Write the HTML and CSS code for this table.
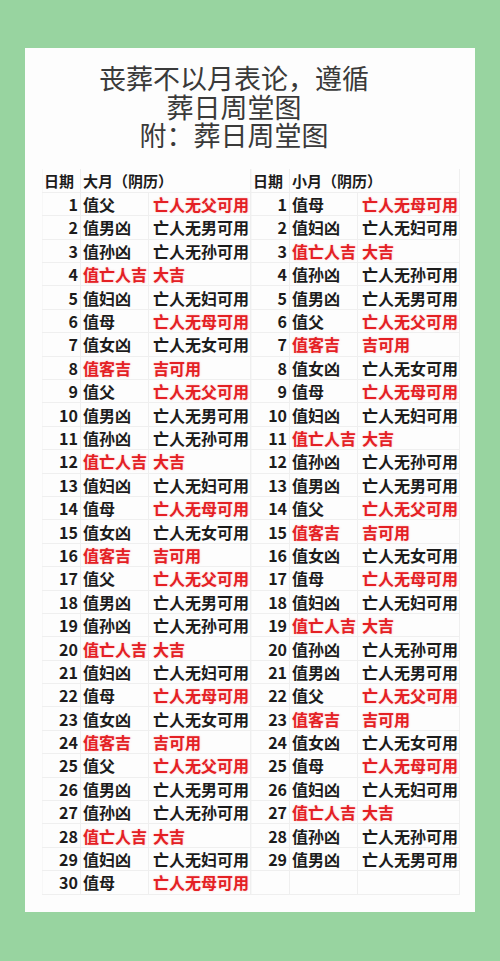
FILE: index.html
```html
<!DOCTYPE html>
<html lang="zh">
<head>
<meta charset="utf-8">
<title>葬日周堂图</title>
<link rel="stylesheet" href="styles.css">
</head>
<body>
<div class="card">
  <div class="title">
    <div>丧葬不以月表论，遵循</div>
    <div>葬日周堂图</div>
    <div>附：葬日周堂图</div>
  </div>
  <div class="tables">
    <table class="tbl">
      <colgroup><col class="c-num"><col class="c-val"><col class="c-res"></colgroup>
      <tr class="head"><td class="h-date">日期</td><td colspan="2" class="h-month">大月（阴历）</td></tr>
      <tr><td class="num">1</td><td>值父</td><td class="red">亡人无父可用</td></tr>
      <tr><td class="num">2</td><td>值男凶</td><td>亡人无男可用</td></tr>
      <tr><td class="num">3</td><td>值孙凶</td><td>亡人无孙可用</td></tr>
      <tr><td class="num">4</td><td class="red">值亡人吉</td><td class="red">大吉</td></tr>
      <tr><td class="num">5</td><td>值妇凶</td><td>亡人无妇可用</td></tr>
      <tr><td class="num">6</td><td>值母</td><td class="red">亡人无母可用</td></tr>
      <tr><td class="num">7</td><td>值女凶</td><td>亡人无女可用</td></tr>
      <tr><td class="num">8</td><td class="red">值客吉</td><td class="red">吉可用</td></tr>
      <tr><td class="num">9</td><td>值父</td><td class="red">亡人无父可用</td></tr>
      <tr><td class="num">10</td><td>值男凶</td><td>亡人无男可用</td></tr>
      <tr><td class="num">11</td><td>值孙凶</td><td>亡人无孙可用</td></tr>
      <tr><td class="num">12</td><td class="red">值亡人吉</td><td class="red">大吉</td></tr>
      <tr><td class="num">13</td><td>值妇凶</td><td>亡人无妇可用</td></tr>
      <tr><td class="num">14</td><td>值母</td><td class="red">亡人无母可用</td></tr>
      <tr><td class="num">15</td><td>值女凶</td><td>亡人无女可用</td></tr>
      <tr><td class="num">16</td><td class="red">值客吉</td><td class="red">吉可用</td></tr>
      <tr><td class="num">17</td><td>值父</td><td class="red">亡人无父可用</td></tr>
      <tr><td class="num">18</td><td>值男凶</td><td>亡人无男可用</td></tr>
      <tr><td class="num">19</td><td>值孙凶</td><td>亡人无孙可用</td></tr>
      <tr><td class="num">20</td><td class="red">值亡人吉</td><td class="red">大吉</td></tr>
      <tr><td class="num">21</td><td>值妇凶</td><td>亡人无妇可用</td></tr>
      <tr><td class="num">22</td><td>值母</td><td class="red">亡人无母可用</td></tr>
      <tr><td class="num">23</td><td>值女凶</td><td>亡人无女可用</td></tr>
      <tr><td class="num">24</td><td class="red">值客吉</td><td class="red">吉可用</td></tr>
      <tr><td class="num">25</td><td>值父</td><td class="red">亡人无父可用</td></tr>
      <tr><td class="num">26</td><td>值男凶</td><td>亡人无男可用</td></tr>
      <tr><td class="num">27</td><td>值孙凶</td><td>亡人无孙可用</td></tr>
      <tr><td class="num">28</td><td class="red">值亡人吉</td><td class="red">大吉</td></tr>
      <tr><td class="num">29</td><td>值妇凶</td><td>亡人无妇可用</td></tr>
      <tr><td class="num">30</td><td>值母</td><td class="red">亡人无母可用</td></tr>
    </table>
    <table class="tbl">
      <colgroup><col class="c-num"><col class="c-val"><col class="c-res"></colgroup>
      <tr class="head"><td class="h-date">日期</td><td colspan="2" class="h-month">小月（阴历）</td></tr>
      <tr><td class="num">1</td><td>值母</td><td class="red">亡人无母可用</td></tr>
      <tr><td class="num">2</td><td>值妇凶</td><td>亡人无妇可用</td></tr>
      <tr><td class="num">3</td><td class="red">值亡人吉</td><td class="red">大吉</td></tr>
      <tr><td class="num">4</td><td>值孙凶</td><td>亡人无孙可用</td></tr>
      <tr><td class="num">5</td><td>值男凶</td><td>亡人无男可用</td></tr>
      <tr><td class="num">6</td><td>值父</td><td class="red">亡人无父可用</td></tr>
      <tr><td class="num">7</td><td class="red">值客吉</td><td class="red">吉可用</td></tr>
      <tr><td class="num">8</td><td>值女凶</td><td>亡人无女可用</td></tr>
      <tr><td class="num">9</td><td>值母</td><td class="red">亡人无母可用</td></tr>
      <tr><td class="num">10</td><td>值妇凶</td><td>亡人无妇可用</td></tr>
      <tr><td class="num">11</td><td class="red">值亡人吉</td><td class="red">大吉</td></tr>
      <tr><td class="num">12</td><td>值孙凶</td><td>亡人无孙可用</td></tr>
      <tr><td class="num">13</td><td>值男凶</td><td>亡人无男可用</td></tr>
      <tr><td class="num">14</td><td>值父</td><td class="red">亡人无父可用</td></tr>
      <tr><td class="num">15</td><td class="red">值客吉</td><td class="red">吉可用</td></tr>
      <tr><td class="num">16</td><td>值女凶</td><td>亡人无女可用</td></tr>
      <tr><td class="num">17</td><td>值母</td><td class="red">亡人无母可用</td></tr>
      <tr><td class="num">18</td><td>值妇凶</td><td>亡人无妇可用</td></tr>
      <tr><td class="num">19</td><td class="red">值亡人吉</td><td class="red">大吉</td></tr>
      <tr><td class="num">20</td><td>值孙凶</td><td>亡人无孙可用</td></tr>
      <tr><td class="num">21</td><td>值男凶</td><td>亡人无男可用</td></tr>
      <tr><td class="num">22</td><td>值父</td><td class="red">亡人无父可用</td></tr>
      <tr><td class="num">23</td><td class="red">值客吉</td><td class="red">吉可用</td></tr>
      <tr><td class="num">24</td><td>值女凶</td><td>亡人无女可用</td></tr>
      <tr><td class="num">25</td><td>值母</td><td class="red">亡人无母可用</td></tr>
      <tr><td class="num">26</td><td>值妇凶</td><td>亡人无妇可用</td></tr>
      <tr><td class="num">27</td><td class="red">值亡人吉</td><td class="red">大吉</td></tr>
      <tr><td class="num">28</td><td>值孙凶</td><td>亡人无孙可用</td></tr>
      <tr><td class="num">29</td><td>值男凶</td><td>亡人无男可用</td></tr>
      <tr><td class="num"></td><td></td><td></td></tr>
    </table>
  </div>
</div>
</body>
</html>
```
FILE: styles.css
```css
html, body {
  margin: 0;
  padding: 0;
}
body {
  background: #98d4a0;
  width: 500px;
  height: 961px;
  padding-top: 48px;
  box-sizing: border-box;
  font-family: "Noto Sans CJK SC", "Noto Sans", sans-serif;
}
.card {
  margin-left: 25px;
  width: 450px;
  height: 864px;
  box-sizing: border-box;
  background: #fdfdfd;
  padding: 16px 13px 0 17px;
}
.title {
  text-align: center;
  font-size: 27px;
  line-height: 28.5px;
  color: #3a3a3a;
  padding-right: 36px;
  margin-bottom: 19px;
}
.tables {
  display: flex;
}
.tbl {
  border-collapse: collapse;
  table-layout: fixed;
  width: 208px;
}
.c-num { width: 38px; }
.c-val { width: 68px; }
.c-res { width: 102px; }
.tbl tr {
  height: 23.4px;
}
.tbl td {
  padding: 0 0 0 2px;
  font-size: 16px;
  font-weight: 700;
  line-height: 20px;
  color: #1c1c1c;
  white-space: nowrap;
  border: 1px solid #efefef;
  overflow: hidden;
}
.tbl td:nth-child(3) {
  padding-left: 4px;
}
.tbl td.num {
  text-align: right;
  padding: 0 2px 0 0;
}
.tbl .head td {
  font-size: 15px;
  border-top-color: transparent;
}
.tbl .head td.h-date {
  text-align: left;
  padding-left: 1px;
}
.tbl .head td.h-month {
  padding-left: 2px;
}
.tbl tr:first-child td:first-child,
.tbl td:first-child {
  border-left-color: #f7f7f7;
}
.tbl td.red {
  color: #e42024;
  text-shadow: 0 0 2px rgba(240, 60, 60, 0.35);
}
```
